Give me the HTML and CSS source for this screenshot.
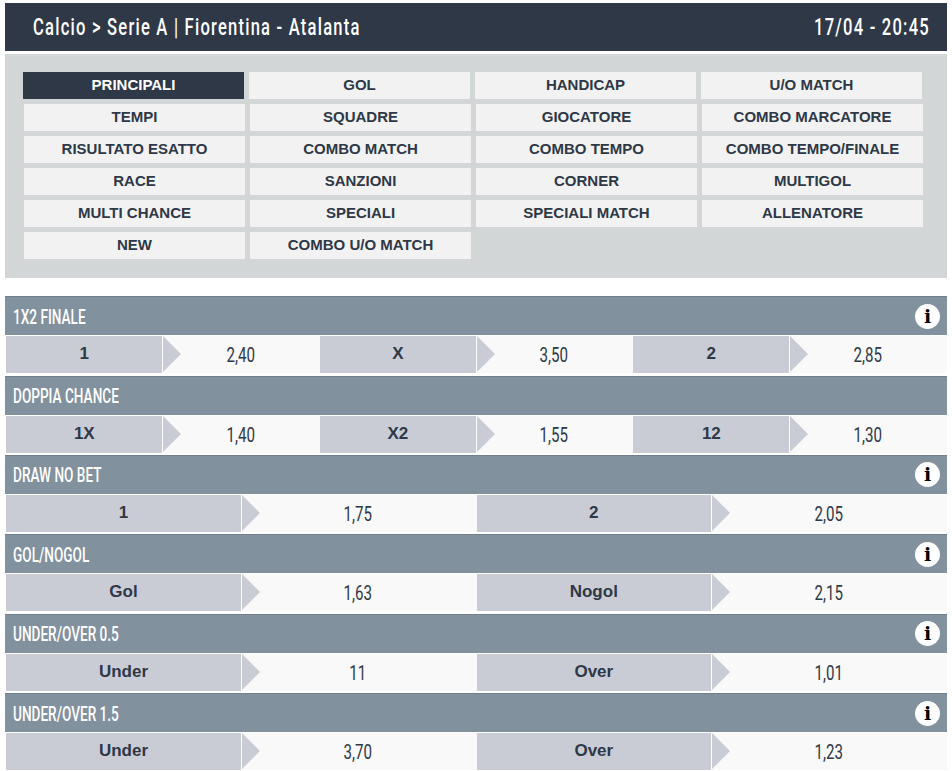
FILE: index.html
```html
<!DOCTYPE html>
<html lang="en">
<head>
  <meta charset="UTF-8" />
  <title>Fiorentina - Atalanta</title>
  <link rel="stylesheet" href="styles.css">
</head>
<body>
  <div class="header">
    <span class="narrow">Calcio &gt; Serie A | Fiorentina - Atalanta</span>
    <span class="narrow end">17/04 - 20:45</span>
  </div>

  <!-- Market groups -->
  <div class="tabs">
    <div class="tab-row first">
      <div class="tab active">PRINCIPALI</div>
      <div class="tab">GOL</div>
      <div class="tab">HANDICAP</div>
      <div class="tab">U/O MATCH</div>
    </div>
    <div class="tab-row">
      <div class="tab">TEMPI</div>
      <div class="tab">SQUADRE</div>
      <div class="tab">GIOCATORE</div>
      <div class="tab">COMBO MARCATORE</div>
    </div>
    <div class="tab-row">
      <div class="tab">RISULTATO ESATTO</div>
      <div class="tab">COMBO MATCH</div>
      <div class="tab">COMBO TEMPO</div>
      <div class="tab">COMBO TEMPO/FINALE</div>
    </div>
    <div class="tab-row">
      <div class="tab">RACE</div>
      <div class="tab">SANZIONI</div>
      <div class="tab">CORNER</div>
      <div class="tab">MULTIGOL</div>
    </div>
    <div class="tab-row">
      <div class="tab">MULTI CHANCE</div>
      <div class="tab">SPECIALI</div>
      <div class="tab">SPECIALI MATCH</div>
      <div class="tab">ALLENATORE</div>
    </div>
    <div class="tab-row">
      <div class="tab">NEW</div>
      <div class="tab">COMBO U/O MATCH</div>
    </div>
  </div>

  <!-- Markets -->
  <div class="markets">
    <div class="market">
      <div class="market-title"><span class="narrow">1X2 FINALE</span> <span class="info">i</span></div>
      <div class="outcomes">
        <div class="outcome"><div class="label">1</div><div class="odd"><span class="narrow">2,40</span></div></div>
        <div class="outcome"><div class="label">X</div><div class="odd"><span class="narrow">3,50</span></div></div>
        <div class="outcome"><div class="label">2</div><div class="odd"><span class="narrow">2,85</span></div></div>
      </div>
    </div>
    <div class="market">
      <div class="market-title"><span class="narrow">DOPPIA CHANCE</span></div>
      <div class="outcomes">
        <div class="outcome"><div class="label">1X</div><div class="odd"><span class="narrow">1,40</span></div></div>
        <div class="outcome"><div class="label">X2</div><div class="odd"><span class="narrow">1,55</span></div></div>
        <div class="outcome"><div class="label">12</div><div class="odd"><span class="narrow">1,30</span></div></div>
      </div>
    </div>
    <div class="market">
      <div class="market-title"><span class="narrow">DRAW NO BET</span> <span class="info">i</span></div>
      <div class="outcomes">
        <div class="outcome"><div class="label">1</div><div class="odd"><span class="narrow">1,75</span></div></div>
        <div class="outcome"><div class="label">2</div><div class="odd"><span class="narrow">2,05</span></div></div>
      </div>
    </div>
    <div class="market">
      <div class="market-title"><span class="narrow">GOL/NOGOL</span> <span class="info">i</span></div>
      <div class="outcomes">
        <div class="outcome"><div class="label">Gol</div><div class="odd"><span class="narrow">1,63</span></div></div>
        <div class="outcome"><div class="label">Nogol</div><div class="odd"><span class="narrow">2,15</span></div></div>
      </div>
    </div>
    <div class="market">
      <div class="market-title"><span class="narrow">UNDER/OVER 0.5</span> <span class="info">i</span></div>
      <div class="outcomes">
        <div class="outcome"><div class="label">Under</div><div class="odd"><span class="narrow">11</span></div></div>
        <div class="outcome"><div class="label">Over</div><div class="odd"><span class="narrow">1,01</span></div></div>
      </div>
    </div>
    <div class="market">
      <div class="market-title"><span class="narrow">UNDER/OVER 1.5</span> <span class="info">i</span></div>
      <div class="outcomes">
        <div class="outcome"><div class="label">Under</div><div class="odd"><span class="narrow">3,70</span></div></div>
        <div class="outcome"><div class="label">Over</div><div class="odd"><span class="narrow">1,23</span></div></div>
      </div>
    </div>
  </div>
</body>
</html>
```

FILE: styles.css
```css
body {
  font-family: "Liberation Sans", Arial, sans-serif;
  background: #fff;
  color: #2e3847;
  margin: 0;
  padding: 3px 5px 0;
  overflow: hidden;
}

/* Condensed text: no narrow family is installed, so squeeze Roboto */
.narrow {
  display: inline-block;
  font-family: Roboto, sans-serif;
  transform: scaleX(0.72);
}

/* Top bar */
.header {
  display: flex;
  justify-content: space-between;
  align-items: center;
  height: 48px;
  padding: 0 17px 0 28px;
  background: #2e3847;
  color: #fff;
  font-size: 23px;
  letter-spacing: 1.7px;
}
.header .narrow {
  font-weight: 500;
  transform-origin: left center;
}
.header .end {
  transform-origin: right center;
}

/* Market groups */
.tabs {
  margin-top: 3px;
  height: 224px;
  box-sizing: border-box;
  padding: 18px 0 0 19px;
  background: #d2d6d7;
}
.tab-row {
  display: flex;
  gap: 5px;
  margin-bottom: 5px;
}
.tab-row.first {
  margin-left: -1px;
}
.tab {
  width: 221px;
  height: 27px;
  line-height: 26px;
  background: #f2f2f2;
  text-align: center;
  font-size: 15px;
  font-weight: bold;
}
.tab.active {
  background: #2e3847;
  color: #fff;
}

/* Markets */
.markets {
  margin-top: 18.2px;
}
.market {
  height: 79.4px;
}
.market-title {
  display: flex;
  justify-content: space-between;
  align-items: center;
  height: 39px;
  box-sizing: border-box;
  padding: 0 7px 0 8px;
  background: #82919e;
  border-top: 1px solid #6f7f8d;
  color: #fff;
  font-size: 20px;
}
.market-title .narrow {
  padding-top: 1px;
  font-weight: 500;
  transform: scaleX(0.68);
  transform-origin: left center;
}
.info {
  width: 25px;
  height: 25px;
  border-radius: 50%;
  background: #fff;
  color: #000;
  text-align: center;
  line-height: 25px;
  font-family: "DejaVu Serif", serif;
  font-size: 19px;
  font-weight: bold;
}
.outcomes {
  display: flex;
  margin: 1px 0 0 1.4px;
  height: 37px;
}
.outcome {
  flex: 1;
  display: flex;
}
.label {
  position: relative;
  flex: 0 0 50%;
  box-sizing: border-box;
  border-right: 1px solid #fff;
  background: #c9ccd4;
  text-align: center;
  line-height: 36px;
  font-size: 17px;
  font-weight: bold;
}
/* Arrow that points at the odd */
.label::after {
  content: "";
  position: absolute;
  top: 0;
  left: calc(100% + 1px);
  border-style: solid;
  border-width: 18.5px 0 18.5px 18px;
  border-color: transparent transparent transparent #c9ccd4;
}
.odd {
  flex: 1;
  padding-right: 2px;
  background: #f9f9f9;
  text-align: center;
  line-height: 37px;
  font-size: 21px;
}
```
